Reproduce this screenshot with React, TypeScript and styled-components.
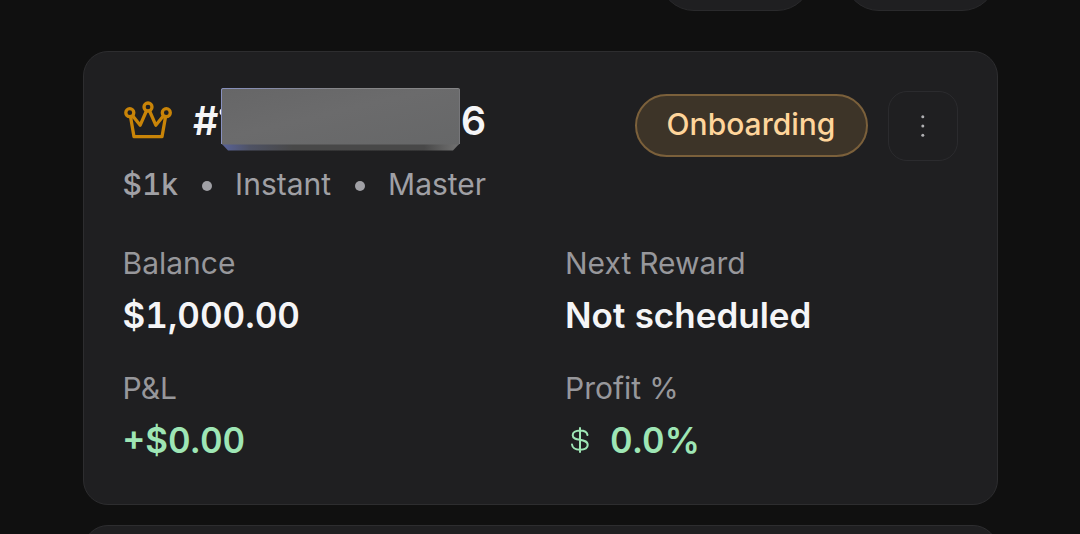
import React from 'react';
import styled, { createGlobalStyle } from 'styled-components';

const Global = createGlobalStyle`
  * { box-sizing: border-box; }
  body {
    margin: 0;
    background: #101010;
    font-family: Inter, "Liberation Sans", sans-serif;
    font-variant-numeric: tabular-nums;
    color: #f5f5f7;
  }
`;

const Page = styled.main`
  width: 1080px;
  height: 534px;
  padding: 0 82px 0 83px;
  overflow: hidden;
  display: flex;
  flex-direction: column;
  background: #101010;
`;

const Toolbar = styled.div`
  height: 51px;
  flex: none;
  display: flex;
  justify-content: flex-end;
  align-items: flex-end;
  gap: 32px;
  padding: 0 1px 40px 0;
`;

const ToolbarButton = styled.div`
  flex: none;
  width: 153px;
  height: 70px;
  border: 1.5px solid #2a2a2c;
  border-radius: 35px;
  background: #1f1f21;
`;

const Card = styled.section`
  flex: none;
  height: 454px;
  margin-bottom: 20px;
  padding: 35px 39px 35px 38.5px;
  border: 1px solid #2d2d2f;
  border-radius: 25px;
  background: #1f1f21;
`;

const Header = styled.header`
  display: flex;
  justify-content: space-between;
  height: 77px;
`;

const Account = styled.div`
  display: flex;
  align-items: center;
  height: 67px;
`;

const CrownIcon = styled.svg`
  width: 50px;
  height: 40px;
  margin: -4px 20px 0 0.5px;
  fill: none;
  stroke: #c98408;
  stroke-width: 3.3;
  stroke-linejoin: round;
`;

const AccountNumber = styled.h2`
  display: flex;
  align-items: center;
  margin: 0;
  font-size: 39.5px;
  line-height: 48px;
  font-weight: 600;
  span { padding-top: 1px; }
`;

const Redaction = styled.svg`
  flex: none;
  width: 239px;
  height: 64px;
  margin: -3px 0.5px 0 2.8px;
  overflow: visible;
`;

const Actions = styled.div`
  display: flex;
  align-items: center;
  height: 78px;
  gap: 20px;
`;

const Status = styled.span`
  display: flex;
  align-items: center;
  justify-content: center;
  width: 233px;
  height: 63px;
  margin-top: -1px;
  padding: 0 1px 3px 0;
  border: 2px solid #7b603b;
  border-radius: 32px;
  background: #3d3428;
  color: #ffd59b;
  font-size: 30px;
  font-weight: 500;
`;

const MenuButton = styled.button`
  display: flex;
  align-items: center;
  justify-content: center;
  width: 70px;
  height: 70px;
  padding: 0 1px 0 0;
  border: 1.5px solid #2b2b2e;
  border-radius: 19px;
  background: transparent;
  svg { width: 4px; height: 24px; fill: #b0b0b3; }
`;

const Details = styled.div`
  display: flex;
  align-items: center;
  height: 40px;
  color: #a0a0a5;
  font-size: 30px;
`;

const Size = styled.span`
  font-weight: 500;
`;

const Dot = styled.i`
  width: 10px;
  height: 10px;
  margin: 3px 23.5px 0;
  border-radius: 50%;
  background: #a0a0a5;
`;

const Stats = styled.dl`
  display: grid;
  grid-template-columns: 442.5px 1fr;
  row-gap: 25px;
  margin: 39px 0 0;
`;

const Stat = styled.div`
  height: 100px;
`;

const Label = styled.dt`
  height: 40px;
  line-height: 40px;
  color: #97979b;
  font-size: 30px;
`;

const Value = styled.dd<{ $positive?: boolean }>`
  display: flex;
  align-items: center;
  height: 48px;
  margin: 8px 0 0;
  color: ${({ $positive }) => ($positive ? '#9ee6b5' : '#f5f5f7')};
  font-size: 35px;
  font-weight: 600;
`;

const DollarIcon = styled.svg`
  width: 30px;
  height: 30px;
  margin-right: 15px;
  fill: none;
  stroke: currentColor;
  stroke-width: 2;
  stroke-linecap: round;
`;

export default function App() {
  return (
    <>
      <Global />
      <Page>
        <Toolbar>
          <ToolbarButton />
          <ToolbarButton />
        </Toolbar>
        <Card>
          <Header>
            <Account>
              <CrownIcon viewBox="123 98 50 40">
                <circle cx="129.8" cy="111.7" r="4" />
                <circle cx="148" cy="106" r="4" />
                <circle cx="166.3" cy="111.7" r="4" />
                <path d="M130.6 116L134 135.7H162L165.5 116M132.8 115L140.2 124.2L146.4 110M149.6 110L155.8 124.2L163.3 115" />
              </CrownIcon>
              <AccountNumber>
                <span>#</span>
                <Redaction viewBox="0 0 239 64">
                  <defs>
                    <linearGradient id="face" x2="1" y2="1">
                      <stop stopColor="#666667" />
                      <stop offset=".45" stopColor="#6b6b6c" />
                      <stop offset="1" stopColor="#666768" />
                    </linearGradient>
                    <linearGradient id="base">
                      <stop stopColor="#59639b" />
                      <stop offset=".12" stopColor="#4e5264" />
                      <stop offset=".3" stopColor="#484848" />
                      <stop offset=".85" stopColor="#484848" />
                      <stop offset="1" stopColor="#747474" />
                    </linearGradient>
                    <linearGradient id="edge">
                      <stop stopColor="#8790bf" />
                      <stop offset=".5" stopColor="#858587" />
                    </linearGradient>
                  </defs>
                  <ellipse cx="0" cy="25" rx="1.4" ry="3" fill="#f5f5f7" />
                  <path d="M0 56H239L232 63.5H7Z" fill="url(#base)" />
                  <rect y="1" width="239" height="56.5" rx="2" fill="url(#face)" />
                  <path d="M.5 57V3Q.5 1.5 2 1.5H237" fill="none" stroke="url(#edge)" />
                  <path d="M237 1.5Q238.5 1.5 238.5 3V57" fill="none" stroke="#77777a" />
                </Redaction>
                <span>6</span>
              </AccountNumber>
            </Account>
            <Actions>
              <Status>Onboarding</Status>
              <MenuButton aria-label="More">
                <svg viewBox="0 0 4 24">
                  <circle cx="1.8" cy="2.8" r="1.5" />
                  <circle cx="1.8" cy="12" r="1.5" />
                  <circle cx="1.8" cy="21.2" r="1.5" />
                </svg>
              </MenuButton>
            </Actions>
          </Header>
          <Details>
            <Size>$1k</Size>
            <Dot />
            <span>Instant</span>
            <Dot />
            <span>Master</span>
          </Details>
          <Stats>
            <Stat>
              <Label>Balance</Label>
              <Value>$1,000.00</Value>
            </Stat>
            <Stat>
              <Label>Next Reward</Label>
              <Value>Not scheduled</Value>
            </Stat>
            <Stat>
              <Label>P&amp;L</Label>
              <Value $positive>+$0.00</Value>
            </Stat>
            <Stat>
              <Label>Profit %</Label>
              <Value $positive>
                <DollarIcon viewBox="0 0 30 30">
                  <path d="M15 3V27M22.5 10C22 7 19 5.5 15 5.5C10.5 5.5 7.7 7.5 7.7 10.2C7.7 17 22.7 12.5 22.7 20C22.7 23 19.5 24.7 15 24.7C10.5 24.7 7.4 22.8 7 19.5" />
                </DollarIcon>
                0.0%
              </Value>
            </Stat>
          </Stats>
        </Card>
        <Card />
      </Page>
    </>
  );
}
